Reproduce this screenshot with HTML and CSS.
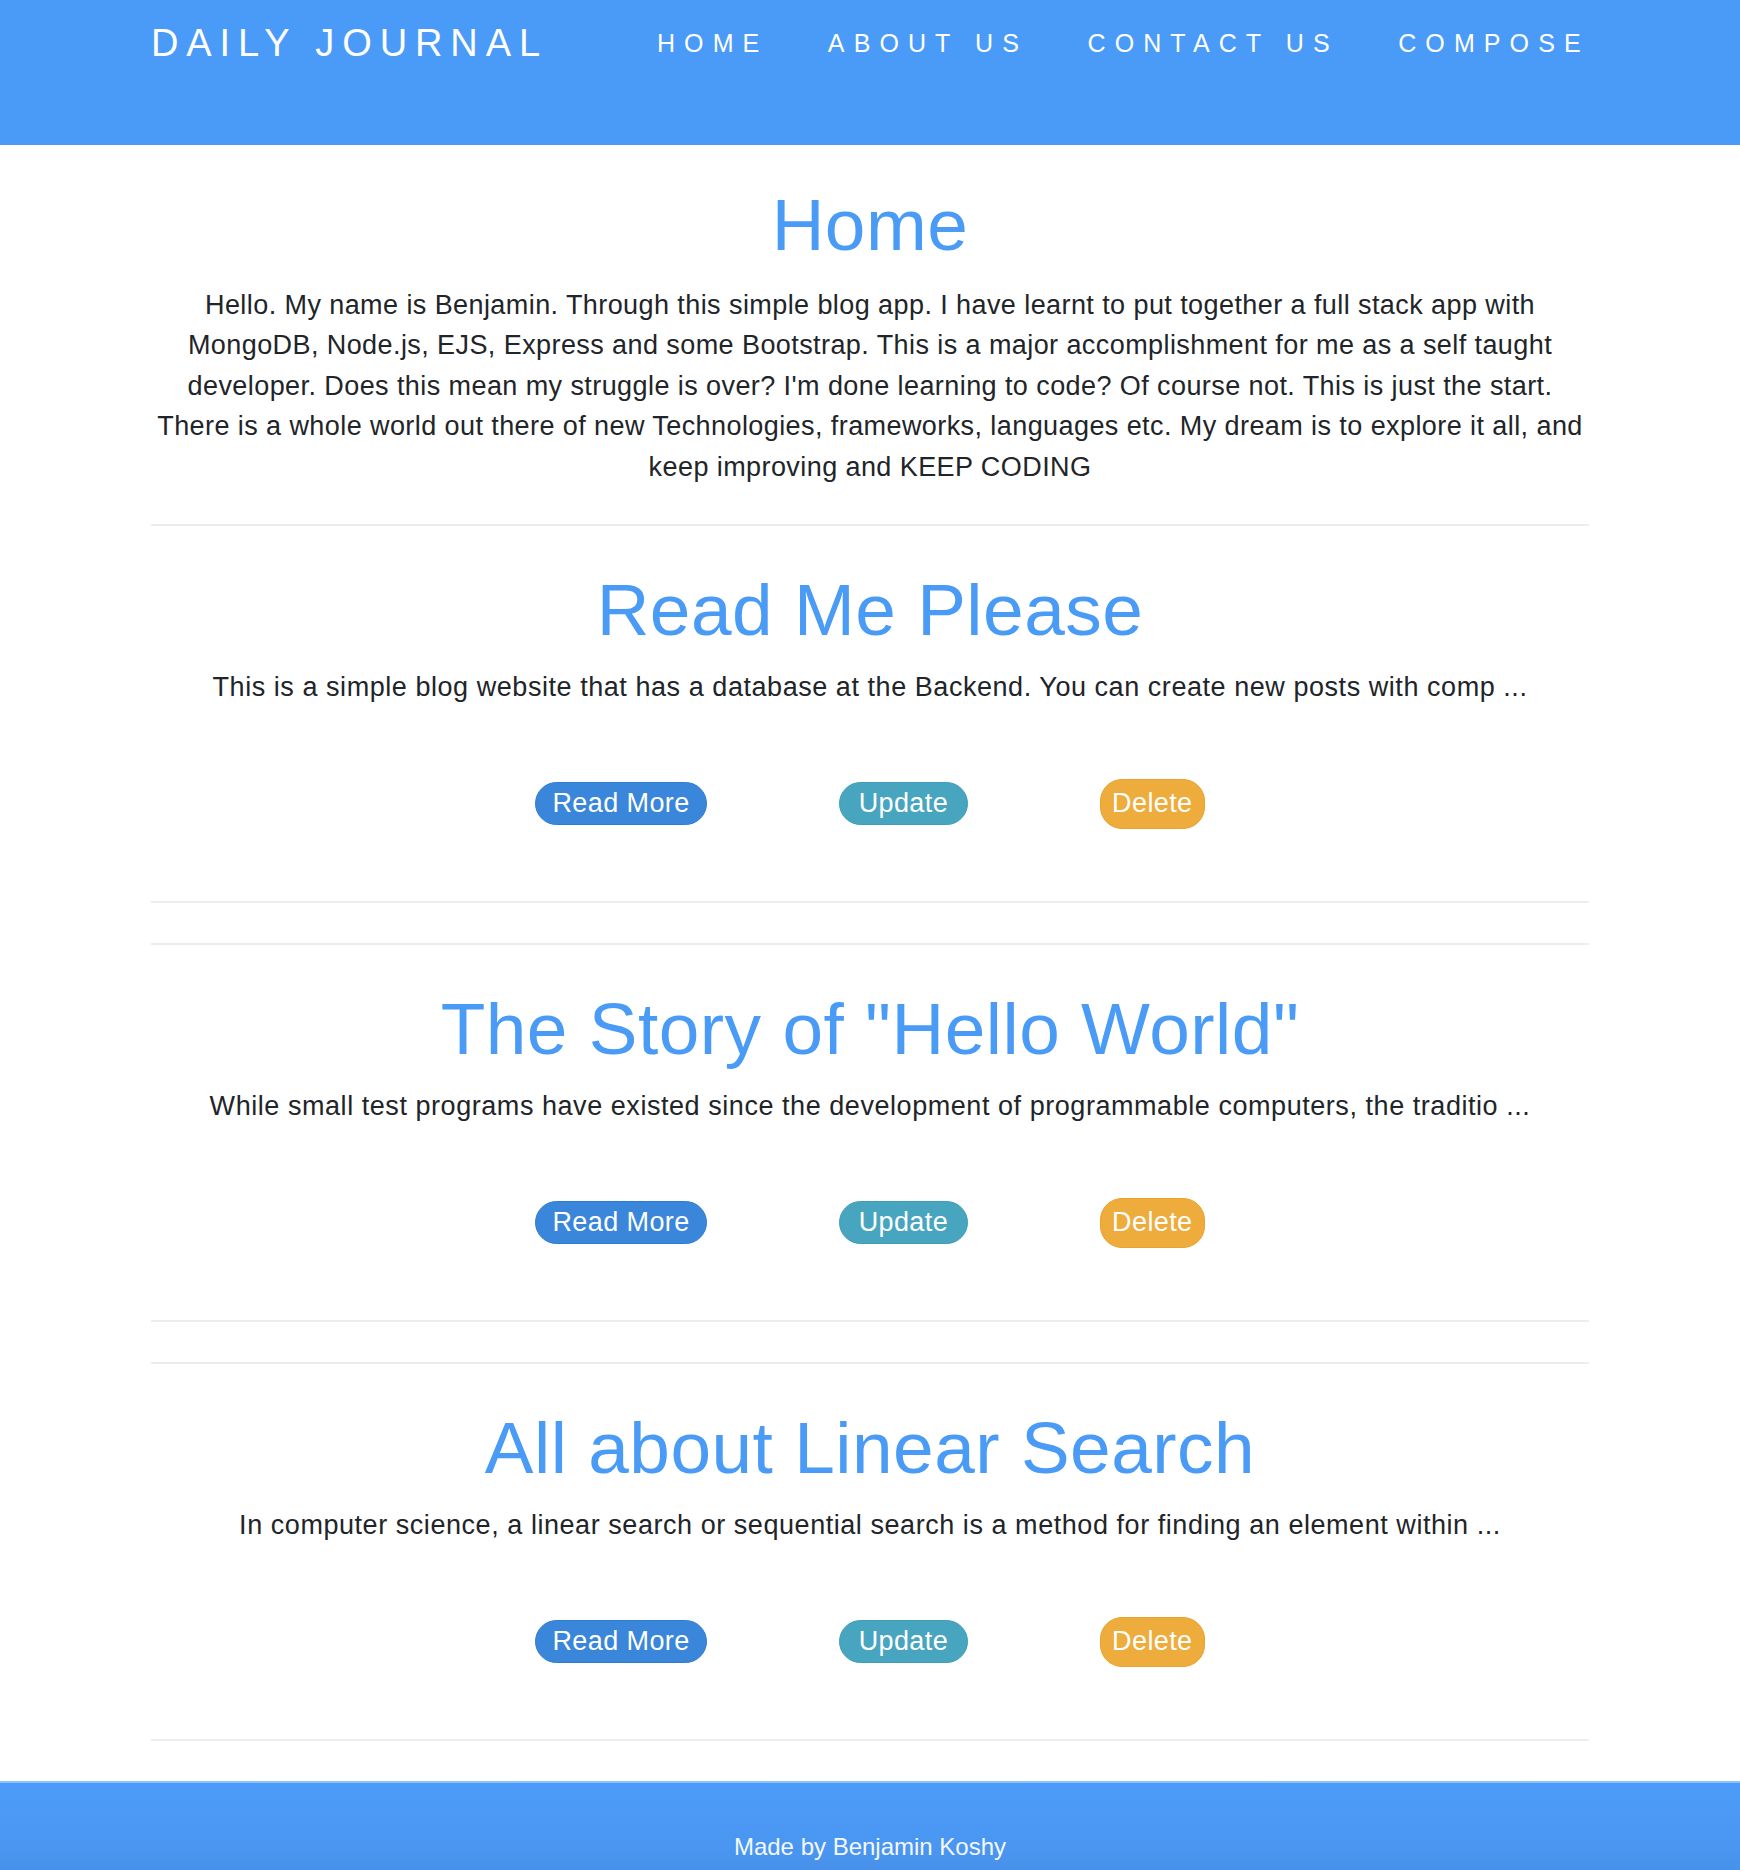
FILE: index.html
```html
<!DOCTYPE html>
<html lang="en">
<head>
<meta charset="utf-8">
<title>Daily Journal</title>
<link rel="stylesheet" href="styles.css">
</head>
<body>
<header class="site-header">
  <div class="container header-inner">
    <a class="brand" href="#">DAILY JOURNAL</a>
    <nav class="nav">
      <a class="nav-link" href="#">HOME</a>
      <a class="nav-link" href="#">ABOUT US</a>
      <a class="nav-link" href="#">CONTACT US</a>
      <a class="nav-link" href="#">COMPOSE</a>
    </nav>
  </div>
</header>

<main class="container content">
  <section class="intro">
    <h1 class="title">Home</h1>
    <p class="text">Hello. My name is Benjamin. Through this simple blog app. I have learnt to put together a full stack app with MongoDB, Node.js, EJS, Express and some Bootstrap. This is a major accomplishment for me as a self taught developer. Does this mean my struggle is over? I'm done learning to code? Of course not. This is just the start. There is a whole world out there of new Technologies, frameworks, languages etc. My dream is to explore it all, and keep improving and KEEP CODING</p>
  </section>

  <hr class="rule">
  <article class="post">
    <h1 class="title">Read Me Please</h1>
    <p class="text">This is a simple blog website that has a database at the Backend. You can create new posts with comp ...</p>
    <div class="actions">
      <a class="btn btn-read" href="#">Read More</a>
      <a class="btn btn-update" href="#">Update</a>
      <button class="btn btn-delete" type="button">Delete</button>
    </div>
  </article>
  <hr class="rule">

  <hr class="rule">
  <article class="post">
    <h1 class="title">The Story of "Hello World"</h1>
    <p class="text">While small test programs have existed since the development of programmable computers, the traditio ...</p>
    <div class="actions">
      <a class="btn btn-read" href="#">Read More</a>
      <a class="btn btn-update" href="#">Update</a>
      <button class="btn btn-delete" type="button">Delete</button>
    </div>
  </article>
  <hr class="rule">

  <hr class="rule">
  <article class="post">
    <h1 class="title">All about Linear Search</h1>
    <p class="text">In computer science, a linear search or sequential search is a method for finding an element within ...</p>
    <div class="actions">
      <a class="btn btn-read" href="#">Read More</a>
      <a class="btn btn-update" href="#">Update</a>
      <button class="btn btn-delete" type="button">Delete</button>
    </div>
  </article>
  <hr class="rule">
</main>

<footer class="site-footer">
  <p class="footer-text">Made by Benjamin Koshy</p>
</footer>
</body>
</html>
```

FILE: styles.css
```css
* {
  box-sizing: border-box;
}

html, body {
  margin: 0;
  padding: 0;
}

body {
  font-family: "Liberation Sans", Arial, Helvetica, sans-serif;
  font-size: 27px;
  line-height: 1.5;
  color: #212529;
  background: #ffffff;
}

.container {
  width: 1438px;
  margin: 0 auto;
}

/* Header */
.site-header {
  height: 145px;
  background: #4a9bf8;
  padding-top: 24px;
}

.header-inner {
  display: flex;
  align-items: flex-start;
}

.brand {
  font-size: 38px;
  line-height: 1;
  letter-spacing: 7.9px;
  color: #ffffff;
  text-decoration: none;
  white-space: nowrap;
}

.nav {
  display: flex;
  gap: 59.5px;
  margin-left: 109px;
  margin-top: 7px;
}

.nav-link {
  font-size: 25px;
  line-height: 1;
  letter-spacing: 9.1px;
  color: #ffffff;
  text-decoration: none;
  white-space: nowrap;
}

/* Content */
.content {
  padding-top: 36px;
  text-align: center;
}

.intro {
  margin-bottom: -3px;
}

.title {
  margin: 0 0 13px;
  font-size: 73px;
  line-height: 88px;
  font-weight: 400;
  color: #4a9bf6;
  letter-spacing: 0.5px;
}

.intro .title {
  margin-bottom: 15.5px;
}

.text {
  margin: 0;
  font-size: 27px;
  line-height: 40.5px;
  letter-spacing: 0.55px;
  color: #212529;
}

.intro .text {
  letter-spacing: 0.42px;
}

.rule {
  margin: 40px 0;
  border: 0;
  height: 2px;
  background: #ededed;
}

.actions {
  display: flex;
  justify-content: center;
  align-items: center;
  gap: 132px;
  height: 50px;
  margin: 71px 0 72.5px;
}

.btn {
  display: inline-block;
  font-family: "Liberation Sans", Arial, Helvetica, sans-serif;
  font-size: 27px;
  line-height: 33px;
  letter-spacing: 0.4px;
  padding: 4px 16px;
  border: 1px solid transparent;
  border-radius: 22px;
  color: #ffffff;
  text-decoration: none;
  cursor: pointer;
}

.btn-read {
  background: #3a86da;
  border-color: #2f7dd3;
}

.btn-update {
  background: #48a5bf;
  border-color: #3f9db8;
  padding-left: 19px;
  padding-right: 19px;
}

.btn-delete {
  background: #eeac3c;
  border-color: #e9a22e;
  padding: 7px 11px 8px;
}

/* Footer */
.site-footer {
  height: 130px;
  padding-top: 46px;
  background: linear-gradient(to bottom, #4b9cf8 0%, #4a97f2 45%, #4589df 100%);
  border-top: 2px solid #8ec2fb;
  text-align: center;
}

.footer-text {
  margin: 0;
  font-size: 24px;
  line-height: 36px;
  color: #f4f8fe;
}
```
